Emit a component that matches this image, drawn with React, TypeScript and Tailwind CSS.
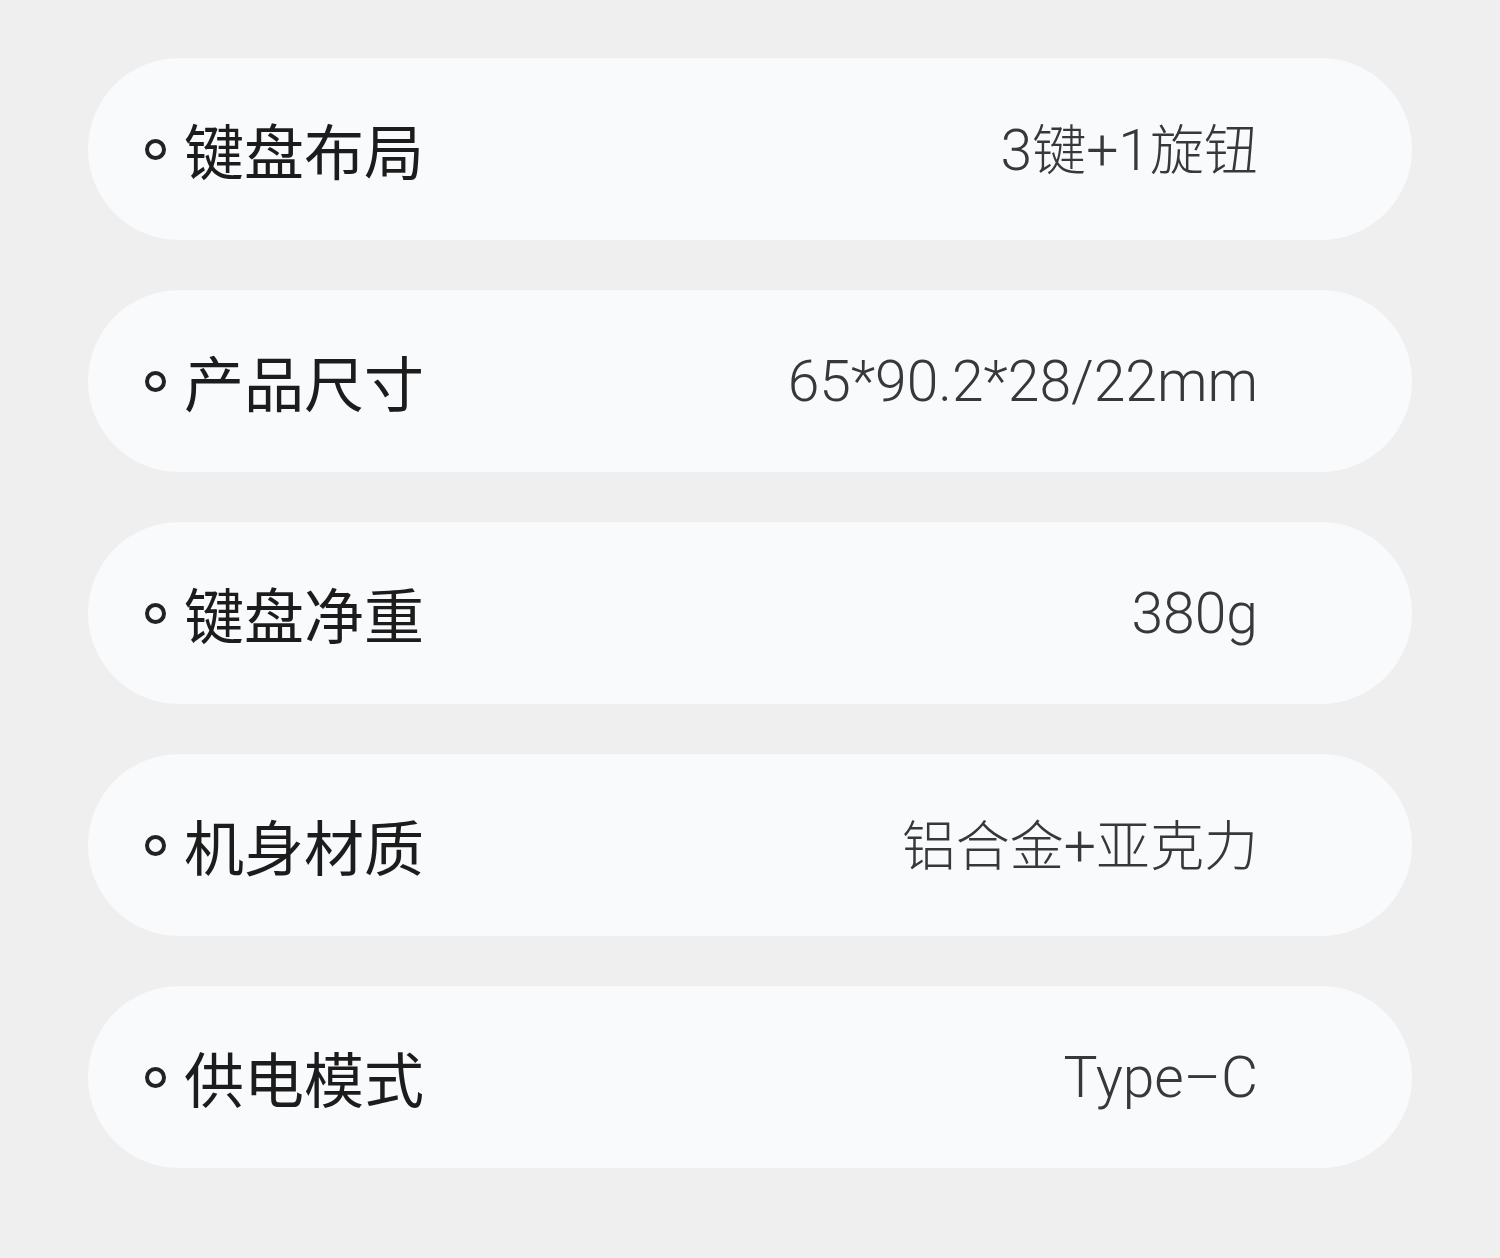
import React from "react";

const rows: { label: string; value: string }[] = [
  { label: "键盘布局", value: "3键+1旋钮" },
  { label: "产品尺寸", value: "65*90.2*28/22mm" },
  { label: "键盘净重", value: "380g" },
  { label: "机身材质", value: "铝合金+亚克力" },
  { label: "供电模式", value: "Type–C" },
];

function Value({ text }: { text: string }) {
  const parts = text.match(/[\u4e00-\u9fff]+|[^\u4e00-\u9fff]+/g) || [];
  return (
    <span className="leading-none text-[#383838] flex items-baseline">
      {parts.map((p, i) =>
        /[\u4e00-\u9fff]/.test(p) ? (
          <span
            key={i}
            className="text-[54px] font-light"
            style={{ fontFamily: '"Noto Sans CJK SC", sans-serif' }}
          >
            {p}
          </span>
        ) : (
          <span
            key={i}
            className="text-[57px] font-light"
            style={{ fontFamily: 'Roboto, "Liberation Sans", "Noto Sans CJK SC", sans-serif' }}
          >
            {p}
          </span>
        )
      )}
    </span>
  );
}

export default function App() {
  return (
    <div
      className="w-[1500px] h-[1258px] bg-[#efefef] px-[88px] pt-[58px] flex flex-col gap-[50px]"
      style={{ fontFamily: '"Noto Sans CJK SC", "Noto Sans", sans-serif' }}
    >
      {rows.map((r) => (
        <div
          key={r.label}
          className="h-[182px] rounded-full bg-[#f9fafc] flex items-center justify-between pl-[57px] pr-[154px]"
        >
          <div className="flex items-center gap-[18px]">
            <span className="w-[21px] h-[21px] rounded-full border-[4px] border-[#222]" />
            <span className="text-[60px] leading-none text-[#1c1c1c] font-normal">{r.label}</span>
          </div>
          <Value text={r.value} />
        </div>
      ))}
    </div>
  );
}
